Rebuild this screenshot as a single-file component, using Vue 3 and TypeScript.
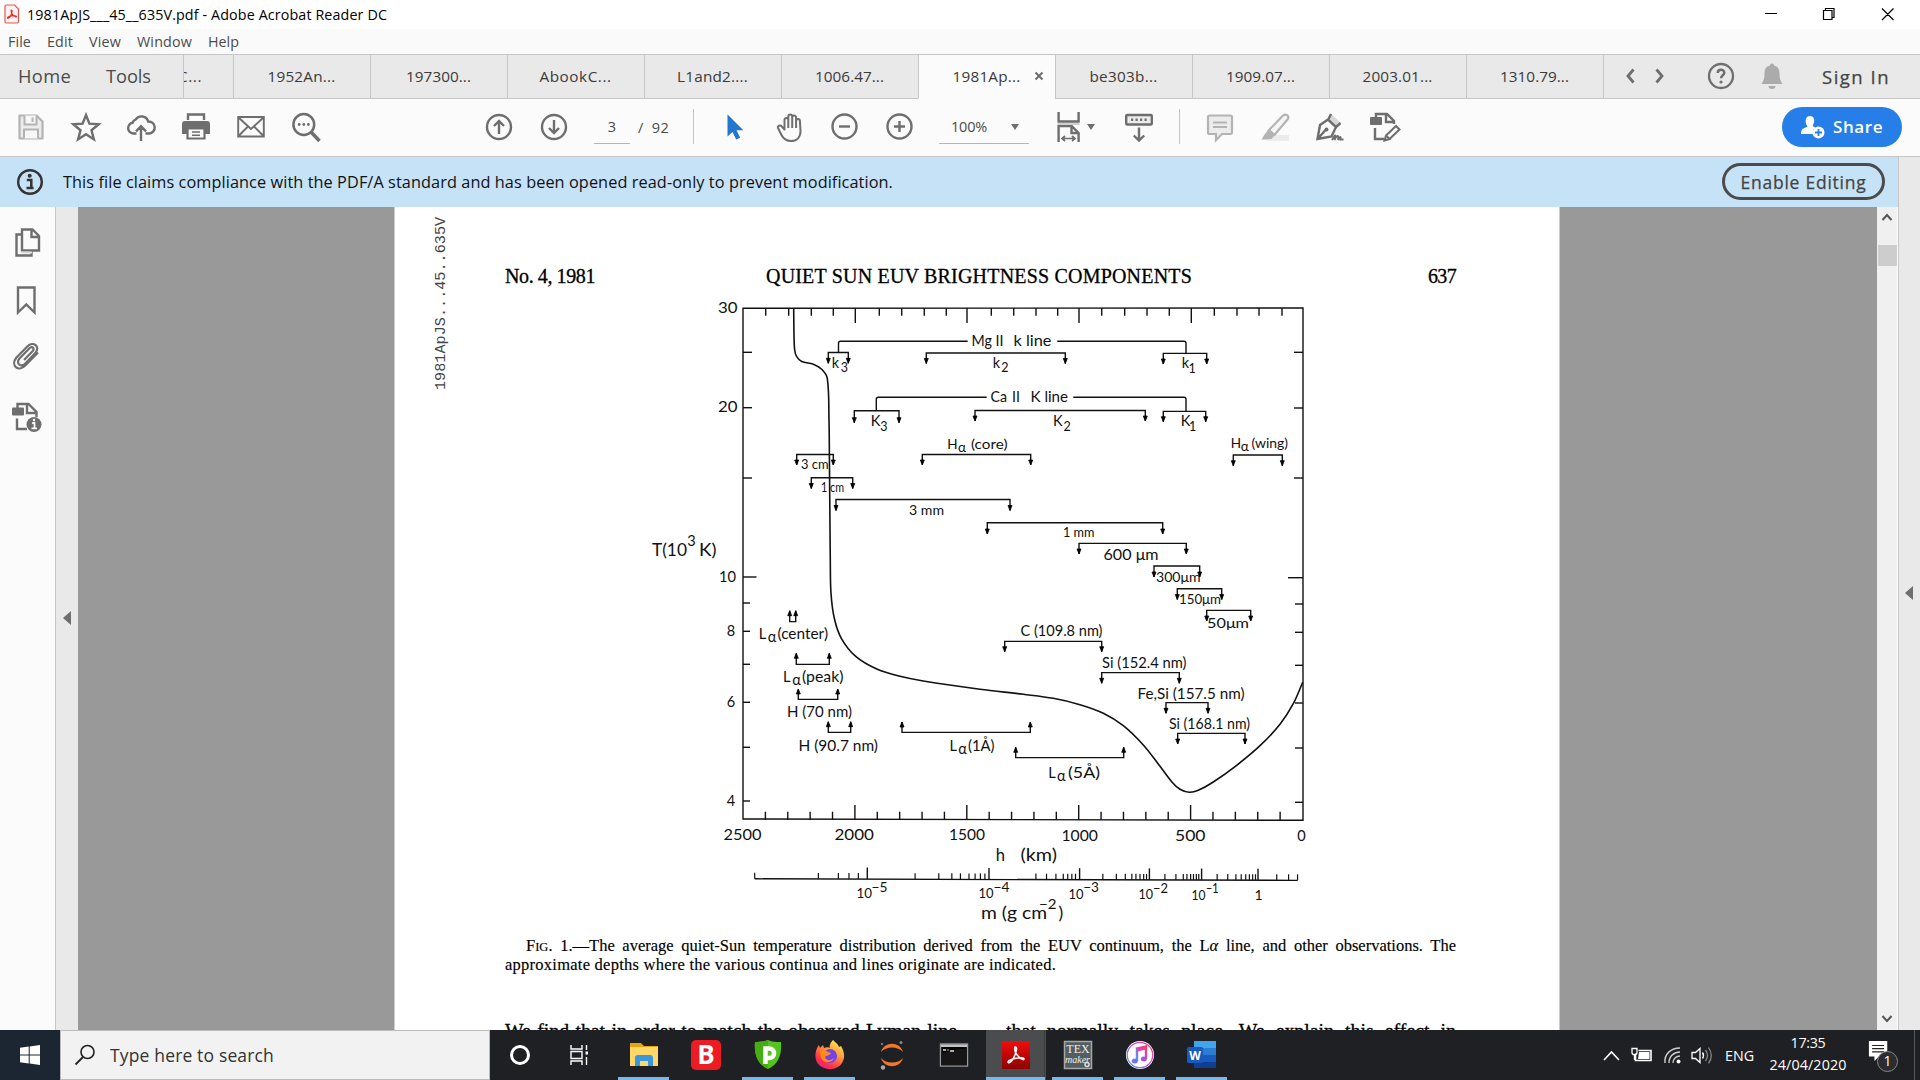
<script setup lang="ts">
// Adjusts tracking so that a label takes exactly the given width.
const vFit = {
  mounted(el: HTMLElement, binding: { value: number }) {
    const n = (el.textContent || '').length
    const w = el.getBoundingClientRect().width
    if (n > 0) el.style.letterSpacing = `${((binding.value - w) / n).toFixed(3)}px`
  },
}

const menus: [string, number][] = [['File', 23], ['Edit', 26], ['View', 32], ['Window', 55], ['Help', 31]]
const tabs: [string, number][] = [
  ['1952An...', 68], ['197300...', 65], ['AbookC...', 72], ['L1and2....', 71], ['1006.47...', 69],
  ['1981Ap...', 68], ['be303b...', 68], ['1909.07...', 69], ['2003.01...', 70], ['1310.79...', 69],
]

const g = 'fill="none" stroke="#6e6e6e" stroke-width="2.4"'
const icons: Record<string, string> = {
  save: '<path d="M4.5 4.500h17l6 6v17h-23z" fill="#ececec" stroke="#b3b3b3" stroke-width="2.200" stroke-linejoin="round"/><path d="M9.500 4.500v9h12v-9M9 27.500v-9h14v9M17.500 6.500v4.500" fill="#f7f7f7" stroke="#b3b3b3" stroke-width="2"/>',
  star: `<path d="M16 4l3.400 8.700 9.300.6-7.200 5.900 2.400 9.200-7.900-5.100-7.900 5.100 2.400-9.200L3.300 13.300l9.300-.6z" ${g}/>`,
  cloud: `<path d="M11.500 22.500H8.200a5.400 5.400 0 0 1-.6-10.700 4.500 4.500 0 0 1 3-3.200 7 7 0 0 1 12.600 1.900 5.900 5.900 0 0 1 1 12h-3.700M16 30V15.500M11 20.300l5-5 5 5" ${g}/>`,
  print: '<path d="M8 9V3.500h16V9" fill="none" stroke="#6e6e6e" stroke-width="2.400"/><path d="M5 10h22a3 3 0 0 1 3 3v10h-5v-5H7v5H2V13a3 3 0 0 1 3-3z" fill="#6e6e6e"/><path d="M7.500 17.500h17v10h-17z" fill="#fafafa" stroke="#6e6e6e" stroke-width="2.200"/><path d="M12 21h8M12 24.200h8" stroke="#6e6e6e" stroke-width="1.600"/>',
  mail: `<path d="M3.200 6h25.600v19.500H3.200zM3.500 6.500L16 18 28.500 6.500M3.500 25l9-9M28.500 25l-9-9" ${g} style="stroke-width:1.900"/>`,
  find: '<circle cx="13.800" cy="13.500" r="10.400" fill="none" stroke="#6e6e6e" stroke-width="2.500"/><path d="M21.500 21.500l8 8.500" stroke="#6e6e6e" stroke-width="3.500"/><g fill="#6e6e6e"><circle cx="9.200" cy="13.500" r="1.400"/><circle cx="13.800" cy="13.500" r="1.400"/><circle cx="18.400" cy="13.500" r="1.400"/></g>',
  up: `<circle cx="16" cy="16" r="12" ${g}/><path d="M16 23V10M11 15l5-5 5 5" ${g}/>`,
  down: `<circle cx="16" cy="16" r="12" ${g}/><path d="M16 9v13M11 17l5 5 5-5" ${g}/>`,
  arrow: '<path d="M8.500 3.500v22l5-4.500 3.700 7.500 4-1.800-3.700-7.400h6.800z" fill="#2176d0"/>',
  hand: `<path d="M10.500 18.500V8.800a1.900 1.900 0 0 1 3.800 0V5.500a1.900 1.900 0 0 1 3.900 0v1a1.900 1.900 0 0 1 3.900 0v3.300a1.900 1.900 0 0 1 3.800 0L26.500 20c0 6-3.500 10-9.500 10-5 0-7.500-2-9.500-6l-3.500-7c-.8-2 2.300-3.500 3.800-1.500zM14.300 8v9M18.200 5.500V17M22.100 8v9" ${g} style="stroke-width:2" stroke-linejoin="round"/>`,
  minus: `<circle cx="15.500" cy="15.500" r="12" ${g}/><path d="M10 15.500h11" ${g}/>`,
  plus: `<circle cx="15.500" cy="15.500" r="12" ${g}/><path d="M10 15.500h11M15.500 10v11" ${g}/>`,
  fit: `<path d="M5.600 1v9.500h20V1M5.600 31V15h13l7 7v9M18.500 15v7h7" ${g}/><path d="M4.500 13h22" stroke="#d0d0d0" stroke-width="2"/><path d="M9.500 27.500h12M12 25l-3 2.500 3 2.500M19 25l3 2.500-3 2.500" ${g} style="stroke-width:1.700"/>`,
  scroll: `<rect x="3.200" y="4" width="25.600" height="9.500" rx="1" fill="#ececec" stroke="#6e6e6e" stroke-width="2.400"/><path d="M8 8.800h16" stroke="#6e6e6e" stroke-width="2.400" stroke-dasharray="2.200 2.300"/><path d="M16 16.500V29M10.800 24.500L16 29.500l5.200-5" ${g}/>`,
  comment: '<path d="M5.500 4.500h21a1.500 1.500 0 0 1 1.500 1.500v15.500a1.500 1.500 0 0 1-1.500 1.500H18l-6 6v-6H5.500A1.500 1.500 0 0 1 4 21.500V6a1.500 1.500 0 0 1 1.500-1.500z" fill="#ececec" stroke="#b3b3b3" stroke-width="2.200"/><path d="M9 11.500h14M9 16h14" stroke="#b3b3b3" stroke-width="2"/>',
  marker: '<path d="M12 24h18v6H7z" fill="#ececec"/><path d="M10 19L24 4.500c3-2.500 7 1 4.500 4L15.500 24z" fill="#f5f5f5" stroke="#b3b3b3" stroke-width="2.200"/><path d="M9.500 18.500l6 6-3 3.500-5 .5H2.500l3-5z" fill="#b3b3b3"/>',
  sign: `<path d="M17 3l10 9-5 4-8-7.500z" fill="#d8d8d8"/><path d="M3.500 28L6 14l8-5.500 8 7.500-4.500 9.500L3.500 28zM4 27.500l7.500-8.500M14 9l3-6M21.500 16.500l5-4.500" ${g}/><circle cx="12.500" cy="18.500" r="2" fill="#6e6e6e"/><path d="M18 29c4-7 4-5 2.500 0 3-6 4.500-5 3.500 0 2-4 3-4 2.500-.5h3" ${g} style="stroke-width:1.900"/>`,
  edit: `<path d="M7 8V3h11l7 7v3M17 3v8h8M6 17v11h9" ${g}/><rect x="1" y="6" width="12" height="8" rx="1" fill="#6e6e6e"/><path d="M15.500 29.500l1.500-5 10-9.500 3.500 3.500-10 9.500zM15.500 29.500l5-1.500-3.500-3.500" ${g} style="stroke-width:2"/>`,
  help: '<circle cx="16" cy="16" r="12" fill="none" stroke="#6e6e6e" stroke-width="2.300"/><path d="M12.700 13c.2-4.300 6.800-4 6.600-.2-.1 2.500-3.200 2.600-3.200 5.500" fill="none" stroke="#6e6e6e" stroke-width="2.500"/><circle cx="16" cy="22" r="1.600" fill="#6e6e6e"/>',
  bell: '<path d="M16 3.500a2 2 0 0 1 2 2c4 .8 5.500 4 5.500 8 0 6 1.500 8 3 10.500h-21c1.500-2.500 3-4.500 3-10.500 0-4 1.500-7.200 5.500-8a2 2 0 0 1 2-2zM12.500 26h7a3.500 3 0 0 1-7 0z" fill="#ababab"/>',
  info: '<circle cx="16" cy="16" r="11.800" fill="none" stroke="#333" stroke-width="2.400"/><circle cx="15.700" cy="9.800" r="2" fill="#333"/><path d="M12.800 14h4.500v8h2.200M12.500 22h7" fill="none" stroke="#333" stroke-width="2.500"/>',
  pages: `<path d="M10 8.500H4.500v21h15V25" ${g}/><path d="M10 3.500h10.500l6.500 6.500v14.500H10zM19.500 3.500v7.500H27" ${g}/><path d="M9 26.500h11" stroke="#ddd" stroke-width="2"/>`,
  bookmark: `<path d="M7 3.500h16.500v25l-8.200-8-8.300 8z" ${g}/>`,
  clip: `<path d="M14 20l8.500-8.800c2.800-3-.5-5.500-3-3L9.500 18.500c-4.200 4.800 1.600 9.500 5.800 5l10-10.500c5.500-6.200-2-12.500-8-6.500L6.500 17.500c-6.500 8 2 15 8.800 8L28 12.500" ${g} style="stroke-width:2.200" transform="translate(-1 0)"/>`,
  docinfo: '<path d="M7.500 8V3h11l8 8v5M17 3v9h9M7 17.500V28h10" fill="none" stroke="#6e6e6e" stroke-width="2.400"/><rect x="2" y="6.500" width="12" height="8" rx="1" fill="#6e6e6e"/><circle cx="24" cy="23.500" r="7.500" fill="#6e6e6e"/><path d="M22.200 22h2.300v5M21.500 27.300h5.500" stroke="#fff" stroke-width="1.800" fill="none"/><circle cx="24" cy="19" r="1.200" fill="#fff"/>',
}

const leftTools = ['save', 'star', 'cloud', 'print', 'mail', 'find']
const viewTools = ['arrow', 'hand', 'minus', 'plus']
const noteTools = ['comment', 'marker', 'sign', 'edit']
const sideTools = ['pages', 'bookmark', 'clip', 'docinfo']

const apps: Record<string, string> = {
  cortana: '<circle cx="16" cy="16" r="8.500" fill="none" stroke="#fff" stroke-width="3"/>',
  tasks: '<g fill="none" stroke="#fff" stroke-width="1.400"><path d="M5 6v4h11V6M5 26v-4h11v4M5 12.500h11v7H5zM20.500 6v5M20.500 18v8"/></g><rect x="19.500" y="12.500" width="2.500" height="3" fill="#fff"/>',
  files: '<path d="M2 4h11l3 3h14v20H2z" fill="#e5a50f"/><path d="M2 8h28v19H2z" fill="#ffd869"/><path d="M7 27v-8a3 3 0 0 1 3-3h12a3 3 0 0 1 3 3v8h-5v-5h-8v5z" fill="#3b96dd"/>',
  bit: '<rect x="1" y="1" width="30" height="30" rx="5" fill="#ed1c24"/>',
  shield: '<path d="M16 1c4 2 9 2 13 2 1 11-2 22-13 27C5 25 2 14 3 3c4 0 9 0 13-2z" fill="#54c41c"/><path d="M3 3c4 0 9 0 13-2v29C5 25 2 14 3 3z" fill="#46ae14"/><path d="M13.500 25V9.500h3.700a4.800 4.800 0 0 1 0 9.600h-3" fill="none" stroke="#fff" stroke-width="4.500"/>',
  fox: '<defs><linearGradient id="fx" x1=".8" y1="0" x2=".2" y2="1"><stop offset="0" stop-color="#fff44f"/><stop offset=".4" stop-color="#ff9640"/><stop offset=".75" stop-color="#ff3647"/><stop offset="1" stop-color="#e31587"/></linearGradient></defs><path d="M19 1c3 3 5 4 6 7l2-1c4 7 4 12 1 17-5 8-18 8-24 1C0 19 1 11 5 6l1 3 3-3 1 3c2-1 5-1 6 0-1-3 1-6 3-8z" fill="url(#fx)"/><circle cx="16" cy="17" r="7" fill="#7542e5"/><path d="M6 12c3-2 6-1 8 1l3 1c-1 3-5 2-6 4 1 4 6 4 9 1-1 5-10 6-13 0z" fill="#ff8a1f"/>',
  jupyter: '<path d="M5 13C8 2 24 2 27 13c-5-6-17-6-22 0zM5 19c3 11 19 11 22 0-5 6-17 6-22 0z" fill="#f37726"/><circle cx="25" cy="3.500" r="1.500" fill="#888"/><circle cx="7" cy="28.500" r="2.200" fill="#aaa"/><circle cx="6" cy="5" r="1.200" fill="#777"/>',
  cmd: '<rect x="2.500" y="5" width="27" height="22" fill="#050505" stroke="#9a9a9a" stroke-width="1.400"/><path d="M3 5.500h26v2.500H3z" fill="#c4c4c4"/><path d="M3.200 26.300V15.500c8-5 15-5 25.600-6v16.800z" fill="#161616"/><path d="M5 11h3M9.500 11h1M12 12h4" stroke="#ddd" stroke-width="1.500"/>',
  acro: '<defs><linearGradient id="ac" x1="0" y1="0" x2="0" y2="1"><stop offset="0" stop-color="#f30b0b"/><stop offset="1" stop-color="#8b0303"/></linearGradient></defs><rect x="2" y="2" width="28" height="28" rx="1" fill="url(#ac)"/><path d="M15 8c3-1 1 7-2 12-2 3-5 5-5 3 0-3 16-6 16-3 0 3-11-5-9-12z" fill="none" stroke="#fff" stroke-width="1.500"/>',
  tex: '<rect x="2.500" y="2.500" width="27" height="27" fill="#555d60" stroke="#a3a8aa" stroke-width="1.500"/><circle cx="25" cy="25.500" r="2" fill="none" stroke="#ddd" stroke-width="1.500"/>',
  tunes: '<defs><linearGradient id="it" x1="1" y1="0" x2="0" y2="1"><stop offset="0" stop-color="#fa3c6b"/><stop offset=".5" stop-color="#c34ee0"/><stop offset="1" stop-color="#2fa8fa"/></linearGradient></defs><circle cx="16" cy="16" r="14" fill="#fff"/><circle cx="16" cy="16" r="12.700" fill="none" stroke="url(#it)" stroke-width="1.200"/><path d="M13 22V9.500L22 7.500V20" fill="none" stroke="url(#it)" stroke-width="2.400"/><path d="M13 11l9-2" stroke="#e8468a" stroke-width="3"/><ellipse cx="10.800" cy="22" rx="3" ry="2.500" fill="#7b6df0"/><ellipse cx="19.800" cy="20" rx="3" ry="2.500" fill="#b052e0"/>',
  word: '<path d="M8 2h22v7H8z" fill="#41a5ee"/><path d="M8 9h22v7H8z" fill="#2b7cd3"/><path d="M8 16h22v7H8z" fill="#185abd"/><path d="M8 23h22v6H8z" fill="#103f91"/><rect x="1" y="8" width="16" height="16" rx="1.500" fill="#185abd"/>',
}
const appNames = ['cortana', 'tasks', 'files', 'bit', 'shield', 'fox', 'jupyter', 'cmd', 'acro', 'tex', 'tunes', 'word']
const running = ['files', 'shield', 'fox', 'acro', 'tex', 'tunes', 'word']
const letters: Record<string, [string, string]> = { bit: ['B', 'lb'], tex: ['TEX', 'lt'], word: ['W', 'lw'] }

/* ---- figure ---- */
const topTicks = [765.7, 788.7, 811.3, 833.3, 855.3, 879.3, 901.7, 924.3, 946.3, 967, 991.3, 1013.7, 1036, 1057.7, 1079, 1101.7, 1124.7, 1147, 1169.3, 1191.3, 1214.3, 1237, 1259, 1282]
const botTicks = Array.from({ length: 24 }, (_, i) => 743 + 22.38 * (i + 1))
const isLong = (i: number) => (i + 1) % 5 === 0
const leftTicks = [[352.3, 9], [407.7, 9], [478, 9], [577, 13.5], [603, 7], [631.3, 7], [664.3, 7], [702.3, 7], [747.3, 7], [801, 7]]
const rightTicks = [[352.3, 9], [408, 9], [478, 9], [577.7, 15], [604, 8], [632.3, 8], [665.3, 8], [703, 8], [748, 8], [802.3, 8]]

const brackets: [number, number, number, number][] = [
  [828.3, 848.3, 352.5, 363.3], [854.3, 899, 410.7, 422.7], [926.3, 1065.3, 353, 363.5], [975, 1145.3, 410.5, 421],
  [796.7, 833.3, 454.5, 465], [922.3, 1030.7, 454.5, 465], [811.3, 852.7, 477.7, 488.5], [836, 1010, 499.5, 510.5],
  [987.3, 1162.7, 522.8, 534], [1079, 1186.3, 543.4, 554], [1154, 1199.7, 566, 577], [1177.3, 1221.7, 588.7, 599.5],
  [1206.7, 1250.7, 610.4, 621], [1163.3, 1206.7, 353.4, 364], [1163.3, 1205.7, 411.4, 421.7], [1233.3, 1282.3, 455, 465.7],
  [1004.7, 1101.7, 641.4, 651.7], [1101.7, 1179.3, 672.6, 683.3], [1166, 1208, 702.6, 713.3], [1177.7, 1245, 733.4, 744],
  [789.7, 795.7, 621.6, 610.7], [796.3, 829.3, 664.4, 653.3], [798.3, 837.7, 699.4, 689], [828.3, 850.7, 732.4, 721.7],
  [902, 1030.3, 732.4, 722], [1015.7, 1123.7, 757.6, 747.3],
]
function head(x: number, y: number, tip: number): string {
  const d = tip > y ? -1 : 1
  return `M${x} ${tip}l-2 ${d * 5}h4z`
}

const points: [number, number][] = [
  [793.7, 308], [794, 335], [794.7, 350], [796.7, 356.7], [801.7, 361.5], [813.3, 364.2], [821.7, 369.3], [827.3, 378.3], [829, 420], [829.4, 456.7],
  [830.3, 560], [831, 593.3], [834.3, 618.3], [841.3, 638.3], [856, 656.7], [877.3, 669.3], [900, 676.3], [923.3, 681], [980, 689.2],
  [1023.3, 694.3], [1053.3, 698.3], [1080, 704.7], [1103.3, 713.3], [1123.3, 725.7], [1143.3, 745], [1158.3, 764], [1171.7, 781.7],
  [1180, 789.3], [1189.3, 792.3], [1198.3, 790.3], [1213.3, 782], [1236.7, 765.3], [1260, 745.7], [1280, 724.3], [1293.3, 703.7], [1302.7, 682.3],
]
const curve = points.slice(1).reduce((d, p, i) => {
  const a = points[Math.max(0, i - 1)], b = points[i], c = points[Math.min(points.length - 1, i + 2)]
  const len = Math.hypot(p[0] - b[0], p[1] - b[1])
  const la = Math.hypot(p[0] - a[0], p[1] - a[1]) || 1
  const lc = Math.hypot(c[0] - b[0], c[1] - b[1]) || 1
  const k = len / 3
  return d + `C${b[0] + ((p[0] - a[0]) / la) * k} ${b[1] + ((p[1] - a[1]) / la) * k} ${p[0] - ((c[0] - b[0]) / lc) * k} ${p[1] - ((c[1] - b[1]) / lc) * k} ${p[0]} ${p[1]}`
}, `M${points[0][0]} ${points[0][1]}`)

// text, left, right, baseline, size
const labels: [string, number, number, number, number][] = [
  ['30', 718, 737.5, 313.3, 14], ['20', 718, 737.5, 412.3, 14], ['10', 719, 736, 582, 14], ['8', 727, 735, 636.3, 14], ['6', 727, 735, 707.3, 14], ['4', 727, 735, 805.7, 14],
  ['T(10', 652, 687, 555.5, 17], ['3', 688, 695, 546, 14], ['K)', 699, 716.5, 555.500, 17],
  ['Mg II', 971.5, 1003.500, 345.7, 14], ['k line', 1013.5, 1051.5, 345.7, 14],
  ['k', 832, 839, 367.7, 14], ['3', 841, 847.500, 371.800, 12], ['k', 993, 1000, 367.5, 14], ['2', 1001.5, 1008, 371.8, 12], ['k', 1182, 1189, 367.5, 14], ['1', 1189.5, 1194.5, 372.5, 12],
  ['Ca', 990.5, 1007, 402.3, 14], ['II', 1012, 1020, 402.3, 14], ['K line', 1030.5, 1068, 402.300, 14],
  ['K', 871, 880, 426, 14], ['3', 880.5, 887.3, 430.5, 12], ['K', 1053.5, 1062, 426, 14], ['2', 1063.5, 1070.5, 431, 12], ['K', 1181.5, 1189.5, 426, 14], ['1', 1190, 1195, 431, 12],
  ['H', 948, 957, 449, 13], ['α', 958, 966, 451.5, 13], ['(core)', 971, 1007.5, 449, 13],
  ['H', 1232, 1240, 448, 13], ['α', 1241, 1248.5, 451, 13], ['(wing)', 1251.5, 1288, 448, 13],
  ['3 cm', 801, 828.5, 469, 13], ['1 cm', 821, 844, 491.5, 13], ['3 mm', 909, 944, 515, 13.5], ['1 mm', 1063, 1094.500, 537, 13.5],
  ['600 μm', 1103.5, 1158.5, 559.5, 14], ['300μm', 1156, 1200.500, 582, 13.5], ['150μm', 1179, 1221, 604.3, 13.5], ['50μm', 1207, 1249, 628, 13.5],
  ['C (109.8 nm)', 1020.5, 1102.5, 635.7, 14], ['Si (152.4 nm)', 1102, 1186.5, 667.5, 14], ['Fe,Si (157.5 nm)', 1137.5, 1244.500, 698.5, 14], ['Si (168.1 nm)', 1169, 1250, 729, 14],
  ['L', 1048, 1056, 778.2, 14], ['α', 1057, 1065.5, 780.5, 14], ['(5Å)', 1068, 1100, 778.2, 14],
  ['L', 949.5, 957, 751, 14], ['α', 958.5, 966.5, 754, 14], ['(1Å)', 968, 994.5, 751, 14],
  ['L', 759, 766, 638.7, 14], ['α', 768, 776, 642, 14], ['(center)', 777.5, 828, 638.7, 14],
  ['L', 783, 790.5, 682.3, 14], ['α', 792.5, 800.5, 685, 14], ['(peak)', 802, 843.5, 682.3, 14],
  ['H (70 nm)', 787, 852, 717.3, 14], ['H (90.7 nm)', 798.5, 878, 751, 14],
  ['2500', 723.5, 761.5, 839.5, 14], ['2000', 834.5, 874, 839.8, 14], ['1500', 949, 985, 840.2, 14], ['1000', 1061.5, 1098, 841, 14], ['500', 1175, 1205.5, 841, 14], ['0', 1297, 1306, 841, 14],
  ['h', 996, 1005, 861, 16], ['(km)', 1020.500, 1057, 861, 16],
  ['10', 856.5, 872, 898, 13.5], ['−5', 871.5, 887.5, 892, 12.5], ['10', 978.5, 993.500, 898, 13.500], ['−4', 993.5, 1009.500, 892, 12.5], ['10', 1068.5, 1083.5, 898.5, 13.500], ['−3', 1083.2, 1099, 892.200, 12.5],
  ['10', 1138.5, 1153, 899, 13.500], ['−2', 1153, 1168, 892.5, 12.5], ['10', 1191.5, 1205.500, 900, 13.500], ['−1', 1206, 1218.5, 893, 12.5], ['1', 1255, 1262, 900, 13.500],
  ['m (g cm', 981, 1047, 919, 17], ['−2', 1039, 1056.5, 908.7, 13.5], [')', 1058, 1063.5, 919, 17],
]
const massLong = [867.3, 989, 1079.6, 1149.4, 1201.6, 1258]
const massShort = [134, 290, 339, 365, 388, 527, 585, 617, 638, 659, 674, 687, 698, 823, 849, 872, 890, 901, 911, 920, 987, 1020, 1042, 1058, 1068, 1078, 1087, 1094, 1139, 1166, 1184, 1193, 1202, 1209, 1216, 1222, 1267, 1293, 1313, 1326, 1337, 1346, 1354, 1361, 1413, 1442, 1464].map(v => 700 + v / 2.45)
const massY = (x: number) => 878.8 + (x - 754.7) * 0.0028
</script>

<template>
  <div class="screen">
    <header class="title">
      <svg class="pdf" viewBox="0 0 16 20"><path d="M2.500 1h8l4 4v12.500a1.500 1.500 0 0 1-1.500 1.500H2.500A1.500 1.500 0 0 1 1 17.500v-15A1.500 1.500 0 0 1 2.500 1z" fill="#fff3f3" stroke="#f0504a" stroke-width="1.200" /><path d="M7.200 6c1.500 0 .8 3-.7 6-1 2-3 3-3 1.800 0-1.800 9-3 9-1.300 0 1.300-6-1.500-5.300-6.500z" fill="none" stroke="#e8322c" stroke-width="1.200" /></svg>
      <span v-fit="360">1981ApJS___45__635V.pdf - Adobe Acrobat Reader DC</span>
      <svg class="winctl" viewBox="0 0 148 29"><g fill="none" stroke="#000" stroke-width="1.200"><path d="M1 13.500h12M59.500 10.500h8.500v9h-8.500zM61.500 10v-1.500h8.500v9h-2M118 8.500l11.500 11.500M129.500 8.500L118 20" /></g></svg>
    </header>
    <nav class="menu"><span v-for="m in menus" :key="m[0]" v-fit="m[1]">{{ m[0] }}</span></nav>
    <div class="tabs">
      <div class="fixed"><span v-fit="53">Home</span><span v-fit="45">Tools</span></div>
      <div class="tab cut"><span v-fit="24">C...</span></div>
      <div v-for="t in tabs" :key="t[0]" class="tab" :class="{ on: t[0] === '1981Ap...' }">
        <span v-fit="t[1]">{{ t[0] }}</span>
        <svg v-if="t[0] === '1981Ap...'" class="close" viewBox="0 0 10 10"><path d="M1.500 1.500l7 7M8.500 1.500l-7 7" stroke="#6e6e6e" stroke-width="2" /></svg>
      </div>
      <div class="account">
        <svg class="nav" viewBox="0 0 40 16"><path d="M8.500 1.500L3 8l5.500 6.500M31.500 1.500L37 8l-5.500 6.500" fill="none" stroke="#6e6e6e" stroke-width="2.800" /></svg>
        <svg class="ic help" viewBox="0 0 32 32" v-html="icons.help" />
        <svg class="ic bell" viewBox="0 0 32 32" v-html="icons.bell" />
        <span v-fit="68">Sign In</span>
      </div>
    </div>
    <div class="tools">
      <div class="grp g1"><i v-for="n in leftTools" :key="n"><svg class="ic" viewBox="0 0 32 32" v-html="icons[n]" /></i></div>
      <div class="grp g2"><i><svg class="ic" viewBox="0 0 32 32" v-html="icons.up" /></i><i><svg class="ic" viewBox="0 0 32 32" v-html="icons.down" /></i></div>
      <div class="field num">3</div>
      <div class="total" v-fit="31">/&nbsp; 92</div>
      <div class="sep s1" />
      <div class="grp g3"><i v-for="n in viewTools" :key="n"><svg class="ic" viewBox="0 0 32 32" v-html="icons[n]" /></i></div>
      <div class="field zoom"><span v-fit="36">100%</span><b class="tri" /></div>
      <div class="fitbox"><svg class="ic" viewBox="0 0 32 32" v-html="icons.fit" /><b class="tri" /></div>
      <svg class="ic scr" viewBox="0 0 32 32" v-html="icons.scroll" />
      <div class="sep s2" />
      <div class="grp g4"><i v-for="n in noteTools" :key="n"><svg class="ic" viewBox="0 0 32 32" v-html="icons[n]" /></i></div>
      <button class="share"><svg viewBox="0 0 24 24"><path d="M9 1c3.500 0 4.500 3 4.200 5.500-.2 2-1.200 2.800-1.400 4 0 1 1.500 1.500 2.500 2-2 1.500-3 4-2.300 6.500H0c0-4 1-5.500 6-7 .8-.3.300-1-.4-2C4 7 4 1 9 1z" fill="#fff" /><circle cx="17.500" cy="17.500" r="6" fill="#fff" /><path d="M17.500 14v7M14 17.500h7" stroke="#267fe8" stroke-width="1.800" /></svg><span v-fit="50">Share</span></button>
    </div>
    <div class="body">
      <div class="left">
        <div class="banner">
          <svg class="ic" viewBox="0 0 32 32" v-html="icons.info" />
          <span class="msg" v-fit="830">This file claims compliance with the PDF/A standard and has been opened read-only to prevent modification.</span>
          <button class="enable"><span v-fit="126">Enable Editing</span></button>
        </div>
        <div class="work">
          <aside class="side"><svg v-for="n in sideTools" :key="n" class="ic" :class="n" viewBox="0 0 32 32" v-html="icons[n]" /></aside>
          <div class="fold"><b /></div>
          <main class="canvas">
            <article class="page">
              <div class="stamp">1981ApJS...45..635V</div>
              <div class="running"><span v-fit="90">No. 4, 1981</span><span class="head" v-fit="426">QUIET SUN EUV BRIGHTNESS COMPONENTS</span><span class="folio" v-fit="28">637</span></div>
              <svg class="figure" viewBox="640 295 680 635">
                <g fill="none" stroke="#111" stroke-width="1.400">
                  <path d="M743 819V308.300L1303 308V820.300Z" />
                  <path v-for="(x, i) in topTicks" :key="'t' + i" :d="`M${x} 308V${isLong(i) ? 323 : 315.700}`" />
                  <path v-for="(x, i) in botTicks" :key="'b' + i" :d="`M${x} 820V${isLong(i) ? 805 : 811.700}`" />
                  <path v-for="(t, i) in leftTicks" :key="'l' + i" :d="`M743 ${t[0]}h${t[1]}`" />
                  <path v-for="(t, i) in rightTicks" :key="'r' + i" :d="`M1303 ${t[0]}h${-t[1]}`" />
                  <path :d="curve" stroke-width="1.600" />
                  <path v-for="(b, i) in brackets" :key="'k' + i" :d="`M${b[0]} ${b[3]}V${b[2]}H${b[1]}V${b[3]}`" />
                  <path d="M967.700 341.300H840.500q-2 0-2 2V352.500M1057.300 341.300H1184q2 0 2 2V353M986.700 397.300H878.300q-2 0-2 2V410.700M1073.300 397.300H1184q2 0 2 2V411" />
                  <path d="M754.700 878.800L1297.600 880.400" />
                  <path v-for="x in massLong" :key="'m' + x" :d="`M${x} ${massY(x)}v-11.500`" />
                  <path v-for="x in massShort" :key="'s' + x" :d="`M${x} ${massY(x)}v-6`" stroke-width="1.200" />
                </g>
                <path v-for="(b, i) in brackets" :key="'h' + i" :d="head(b[0], b[2], b[3]) + head(b[1], b[2], b[3])" fill="#000" stroke="#000" stroke-width=".8" />
                <g class="lab">
                  <template v-for="(l, i) in labels" :key="'x' + i">
                    <text v-if="l[0].length > 1" :x="l[1]" :y="l[3]" :font-size="l[4] * 1.04" :textLength="l[2] - l[1]" lengthAdjust="spacingAndGlyphs">{{ l[0] }}</text>
                    <text v-else :x="(l[1] + l[2]) / 2" :y="l[3]" :font-size="l[4] * 1.04" text-anchor="middle">{{ l[0] }}</text>
                  </template>
                </g>
              </svg>
              <div class="caption">
                <p class="c1">F<small>IG</small>. 1.—The average quiet-Sun temperature distribution derived from the EUV continuum, the L<em>α</em> line, and other observations. The</p>
                <p><span v-fit="551">approximate depths where the various continua and lines originate are indicated.</span></p>
              </div>
              <div class="cols"><p>We find that in order to match the observed Lyman line</p><p>that normally takes place. We explain this effect in</p></div>
            </article>
          </main>
          <div class="bar">
            <svg viewBox="0 0 12 10"><path d="M1.500 8L6 3l4.500 5" fill="none" stroke="#555" stroke-width="2" /></svg>
            <div class="thumb" />
            <svg class="dn" viewBox="0 0 12 10"><path d="M1.500 2L6 7l4.500-5" fill="none" stroke="#555" stroke-width="2" /></svg>
          </div>
        </div>
      </div>
      <div class="rail"><b /></div>
    </div>
    <footer class="task">
      <div class="start"><svg viewBox="0 0 20 20"><path d="M0 2.800L8.700 1.600v8H0zM9.700 1.400L20 0v9.600H9.700zM0 10.500h8.700v8L0 17.300zM9.700 10.500H20V20L9.700 18.600z" fill="#fff" /></svg></div>
      <div class="search"><svg viewBox="0 0 22 22"><circle cx="13.500" cy="8" r="6.500" fill="none" stroke="#222" stroke-width="1.600" /><path d="M9 13L1.500 20.500" stroke="#222" stroke-width="1.800" /></svg><span v-fit="164">Type here to search</span></div>
      <div v-for="a in appNames" :key="a" class="app" :class="{ run: running.includes(a), cur: a === 'acro' }">
        <svg viewBox="0 0 32 32"><g v-html="apps[a]" />
          <text v-if="letters[a]" :class="letters[a][1]" x="16" :y="a === 'tex' ? 14 : 25" text-anchor="middle">{{ letters[a][0] }}</text>
          <text v-if="a === 'tex'" class="lm" x="15.500" y="23.500" text-anchor="middle">maker</text>
        </svg>
      </div>
      <div class="tray">
        <svg class="sys" viewBox="0 0 110 30"><g fill="none" stroke="#fff" stroke-width="1.600"><path d="M1 20l7.500-8 7.500 8" /><path d="M35.500 10.500H48v10H32.500v-7" /><path d="M29 8.500v4c0 3 5 3 5 0v-4zM31.500 15v5" stroke-width="1.300" /><path d="M89 12.500h3.500l4.500-4v14l-4.500-4H89z" stroke-width="1.300" /><path d="M99.500 12.500q2 3 0 6" stroke-width="1.400" /></g><path d="M36 12h10.500v7H35z" fill="#fff" /><path d="M102.500 10q4 5.500 0 11M105.500 7.500q5.500 8 0 16" fill="none" stroke="#888" stroke-width="1.300" /><g fill="none" stroke="#ccc" stroke-width="1.400"><path d="M62 23C61 14 68 8 77 8M66 23c0-7 5-11 11-11M70 23c0-4 3-7 7-7" /></g><circle cx="75.500" cy="21.500" r="2" fill="#fff" /></svg>
        <span class="eng" v-fit="29">ENG</span>
        <div class="clock"><span v-fit="35">17:35</span><span v-fit="77">24/04/2020</span></div>
        <div class="note"><svg viewBox="0 0 24 24"><path d="M1 1h20v17h-9l-5 5v-5H1z" fill="#fff" /><path d="M4.500 6h13M4.500 9.500h13M4.500 13h13" stroke="#222" stroke-width="1.300" /></svg><b>1</b></div>
      </div>
    </footer>
  </div>
</template>

<style>
html, body { margin: 0; overflow: hidden; background: #fff; }
</style>

<style scoped>
* { box-sizing: border-box; }
.screen { width: 1920px; height: 1080px; display: flex; flex-direction: column; overflow: hidden; font-family: "Open Sans", "Noto Sans", sans-serif; color: #444; background: #fff; }
span { white-space: nowrap; }
.ic { width: 32px; height: 32px; display: block; flex: none; }
.title { height: 29px; display: flex; align-items: center; padding-left: 4px; font-size: 14.300px; color: #000; flex: none; }
.pdf { width: 16px; height: 20px; margin-right: 7px; margin-top: -2px; }
.winctl { width: 148px; height: 29px; margin-left: auto; margin-right: 8px; }
.menu { height: 25px; background: #fafafa; display: flex; align-items: center; gap: 16px; padding-left: 8px; font-size: 14.300px; color: #4b4b4b; flex: none; }
.tabs { height: 45px; border-top: 1px solid #c6c6c6; background: #e9e9e9; display: flex; flex: none; font-size: 15.300px; color: #3a3a3a; }
.fixed { width: 183px; display: flex; align-items: center; padding-left: 18px; gap: 35px; font-size: 18.300px; color: #4b4b4b; border-bottom: 1px solid #c6c6c6; padding-bottom: 3px; }
.tab { width: 137px; border-left: 1px solid #c6c6c6; border-bottom: 1px solid #c6c6c6; display: flex; align-items: center; justify-content: center; position: relative; padding: 0 1px 2px 0; }
.tab.cut { width: 50px; overflow: hidden; justify-content: flex-start; }
.cut span { margin-left: -6px; }
.tab.on { background: #fbfbfb; border-bottom-color: #fbfbfb; }
.close { position: absolute; width: 10px; height: 10px; right: 11px; top: 16px; }
.account { flex: 1; border-left: 1px solid #c6c6c6; border-bottom: 1px solid #c6c6c6; display: flex; align-items: center; font-size: 18.500px; color: #444; padding-bottom: 2px; }
.account span { margin-left: 34px; padding-top: 2px; -webkit-text-stroke: .25px #444; }
.nav { width: 40px; height: 16px; margin-left: 21px; }
.help { margin-left: 40px; }
.bell { margin-left: 19px; }
.tools { height: 58px; background: #fbfbfb; border-bottom: 1px solid #c6c6c6; display: flex; align-items: center; flex: none; font-size: 14.500px; color: #4b4b4b; padding-bottom: 2px; }
.grp { display: flex; }
.grp i { width: 55px; display: flex; justify-content: center; }
.g1 { margin-left: 3px; }
.g2 { margin-left: 138px; }
.field { height: 35px; border-bottom: 1px solid #b5b5b5; display: flex; align-items: center; justify-content: center; padding-top: 1px; }
.num { width: 36px; margin-left: 13px; }
.total { margin-left: 8px; white-space: nowrap; padding-top: 2px; }
.sep { width: 1px; height: 35px; background: #c6c6c6; }
.s1 { margin-left: 24px; }
.g3 { margin-left: 13px; }
.zoom { width: 90px; margin-left: 12px; justify-content: space-between; padding: 1px 10px 0 12px; }
.tri { border: 4.500px solid transparent; border-top: 6px solid #6e6e6e; border-bottom: 0; width: 0; height: 0; }
.fitbox { margin-left: 24px; display: flex; align-items: center; gap: 2px; }
.scr { margin-left: 28px; }
.s2 { margin-left: 24px; }
.g4 { margin-left: 12px; }
.share { margin-left: auto; margin-right: 18px; width: 120px; height: 40px; border: 0; border-radius: 20px; background: #267fe8; color: #fff; font: 600 17px "Open Sans", sans-serif; display: flex; align-items: center; gap: 8px; padding: 0 0 0 19px; }
.share svg { width: 24px; height: 24px; }
.body { flex: 1; display: flex; min-height: 0; }
.left { width: 1898px; display: flex; flex-direction: column; }
.rail { width: 22px; border-left: 1px solid #c6c6c6; background: #e9e9e9; padding: 429px 0 0 6px; }
.rail b, .fold b { display: block; width: 0; height: 0; border: 7px solid transparent; border-right: 8px solid #6e6e6e; border-left: 0; }
.banner { height: 50px; background: #c6e2f7; display: flex; align-items: center; padding: 0 13px 1px 14px; color: #111; font-size: 16.300px; flex: none; }
.msg { margin-left: 17px; }
.enable { margin-left: auto; width: 163px; height: 37px; border: 3px solid #4b4b4b; border-radius: 19px; background: none; color: #444; font: 17.500px "Open Sans", sans-serif; padding: 0; display: flex; align-items: center; justify-content: center; -webkit-text-stroke: .25px #444; }
.work { flex: 1; display: flex; min-height: 0; }
.side { width: 56px; background: #fbfbfb; border-right: 1px solid #c6c6c6; display: flex; flex-direction: column; padding: 19px 0 0 12px; gap: 26px; }
.side .bookmark { margin-left: -1px; }
.side .docinfo { margin-left: -2px; margin-top: 3px; }
.side .clip { margin: -2px 0 0 -1px; }
.fold { width: 22px; background: #e9e9e9; padding: 404px 0 0 7px; }
.canvas { width: 1799px; background: #999; padding: 0 0 0 316px; }
.page { width: 1166px; height: 100%; background: #fff; border: solid #ccc; border-width: 0 1px; position: relative; overflow: hidden; padding: 55px 103px 0 110px; font-family: "Liberation Serif", serif; color: #000; }
.stamp { position: absolute; left: 37px; top: 9px; height: 174px; writing-mode: vertical-rl; transform: rotate(180deg); font: 15.200px/18px "Liberation Mono", monospace; color: #444; white-space: nowrap; }
.running { height: 33px; display: flex; font-size: 20px; line-height: 28px; -webkit-text-stroke: .3px #000; }
.head { margin-left: 171px; }
.folio { margin-left: auto; }
.figure { display: block; width: 680px; height: 635px; margin-left: 135px; }
.lab { font-family: Lato, sans-serif; fill: #111; }
.caption { margin-top: 7px; font-size: 16.500px; line-height: 18px; width: 951px; -webkit-text-stroke: .15px #000; }
.caption p { margin: 0; white-space: nowrap; }
.c1 { padding-left: 21px; text-align-last: justify; }
.caption small { font-size: 12.500px; }
.cols { display: flex; justify-content: space-between; margin-top: 44px; width: 951px; font-size: 19.800px; line-height: 24px; -webkit-text-stroke: .3px #000; }
.cols p { margin: 0; width: 452px; text-align-last: justify; white-space: nowrap; }
.cols p + p { width: 450px; }
.bar { width: 21px; background: #f0f0f0; display: flex; flex-direction: column; align-items: center; padding: 5px 0 6px; border-right: 1px solid #fff; }
.bar svg { width: 12px; height: 10px; }
.thumb { width: 19px; height: 21px; background: #cdcdcd; margin-top: 23px; }
.dn { margin-top: auto; }
.task { height: 50px; background: #1f2023; display: flex; flex: none; color: #fff; }
.start { width: 60px; background: #1c2632; display: flex; align-items: center; justify-content: center; }
.start svg { width: 20px; height: 20px; }
.search { width: 430px; background: #f2f2f2; border: 1px solid #bbb; display: flex; align-items: center; padding-left: 13px; gap: 14px; font-size: 17.500px; color: #333; }
.search svg { width: 22px; height: 22px; }
.app { width: 62px; display: flex; align-items: center; justify-content: center; position: relative; left: -1px; }
.app svg { width: 32px; height: 32px; }
.app.run::after { content: ""; position: absolute; left: 5px; right: 6px; bottom: 0; height: 3px; background: #76b9ed; }
.app.cur { background: linear-gradient(90deg, transparent 1px, #4b4c4e 1px, #4b4c4e 59px, #333 59px, #555 61px, transparent 61px); }
.app.cur::after { left: 1px; right: 2px; }
.lb { font: 700 26px "Open Sans", sans-serif; fill: #fff; }
.lt { font: 12px "Liberation Serif", serif; fill: #eee; }
.lm { font: italic 10px "Liberation Serif", serif; fill: #eee; }
.lw { font: 700 12px "Open Sans", sans-serif; fill: #fff; transform: translate(-7px, -4.500px); }
.tray { margin-left: auto; display: flex; align-items: center; border-right: 1px solid #55575a; margin-right: 5px; font-size: 14.300px; }
.sys { width: 110px; height: 30px; margin-right: 12px; }
.clock { width: 80px; margin-left: 14px; display: flex; flex-direction: column; align-items: center; line-height: 22px; padding-bottom: 2px; }
.note { position: relative; width: 46px; margin-left: 20px; height: 30px; }
.note svg { width: 22px; height: 22px; }
.note b { position: absolute; left: 9px; top: 11px; width: 21px; height: 21px; border: 1.300px solid #888; border-radius: 50%; background: #2b2c2f; font: 14px/18px "Open Sans", sans-serif; text-align: center; }
</style>
